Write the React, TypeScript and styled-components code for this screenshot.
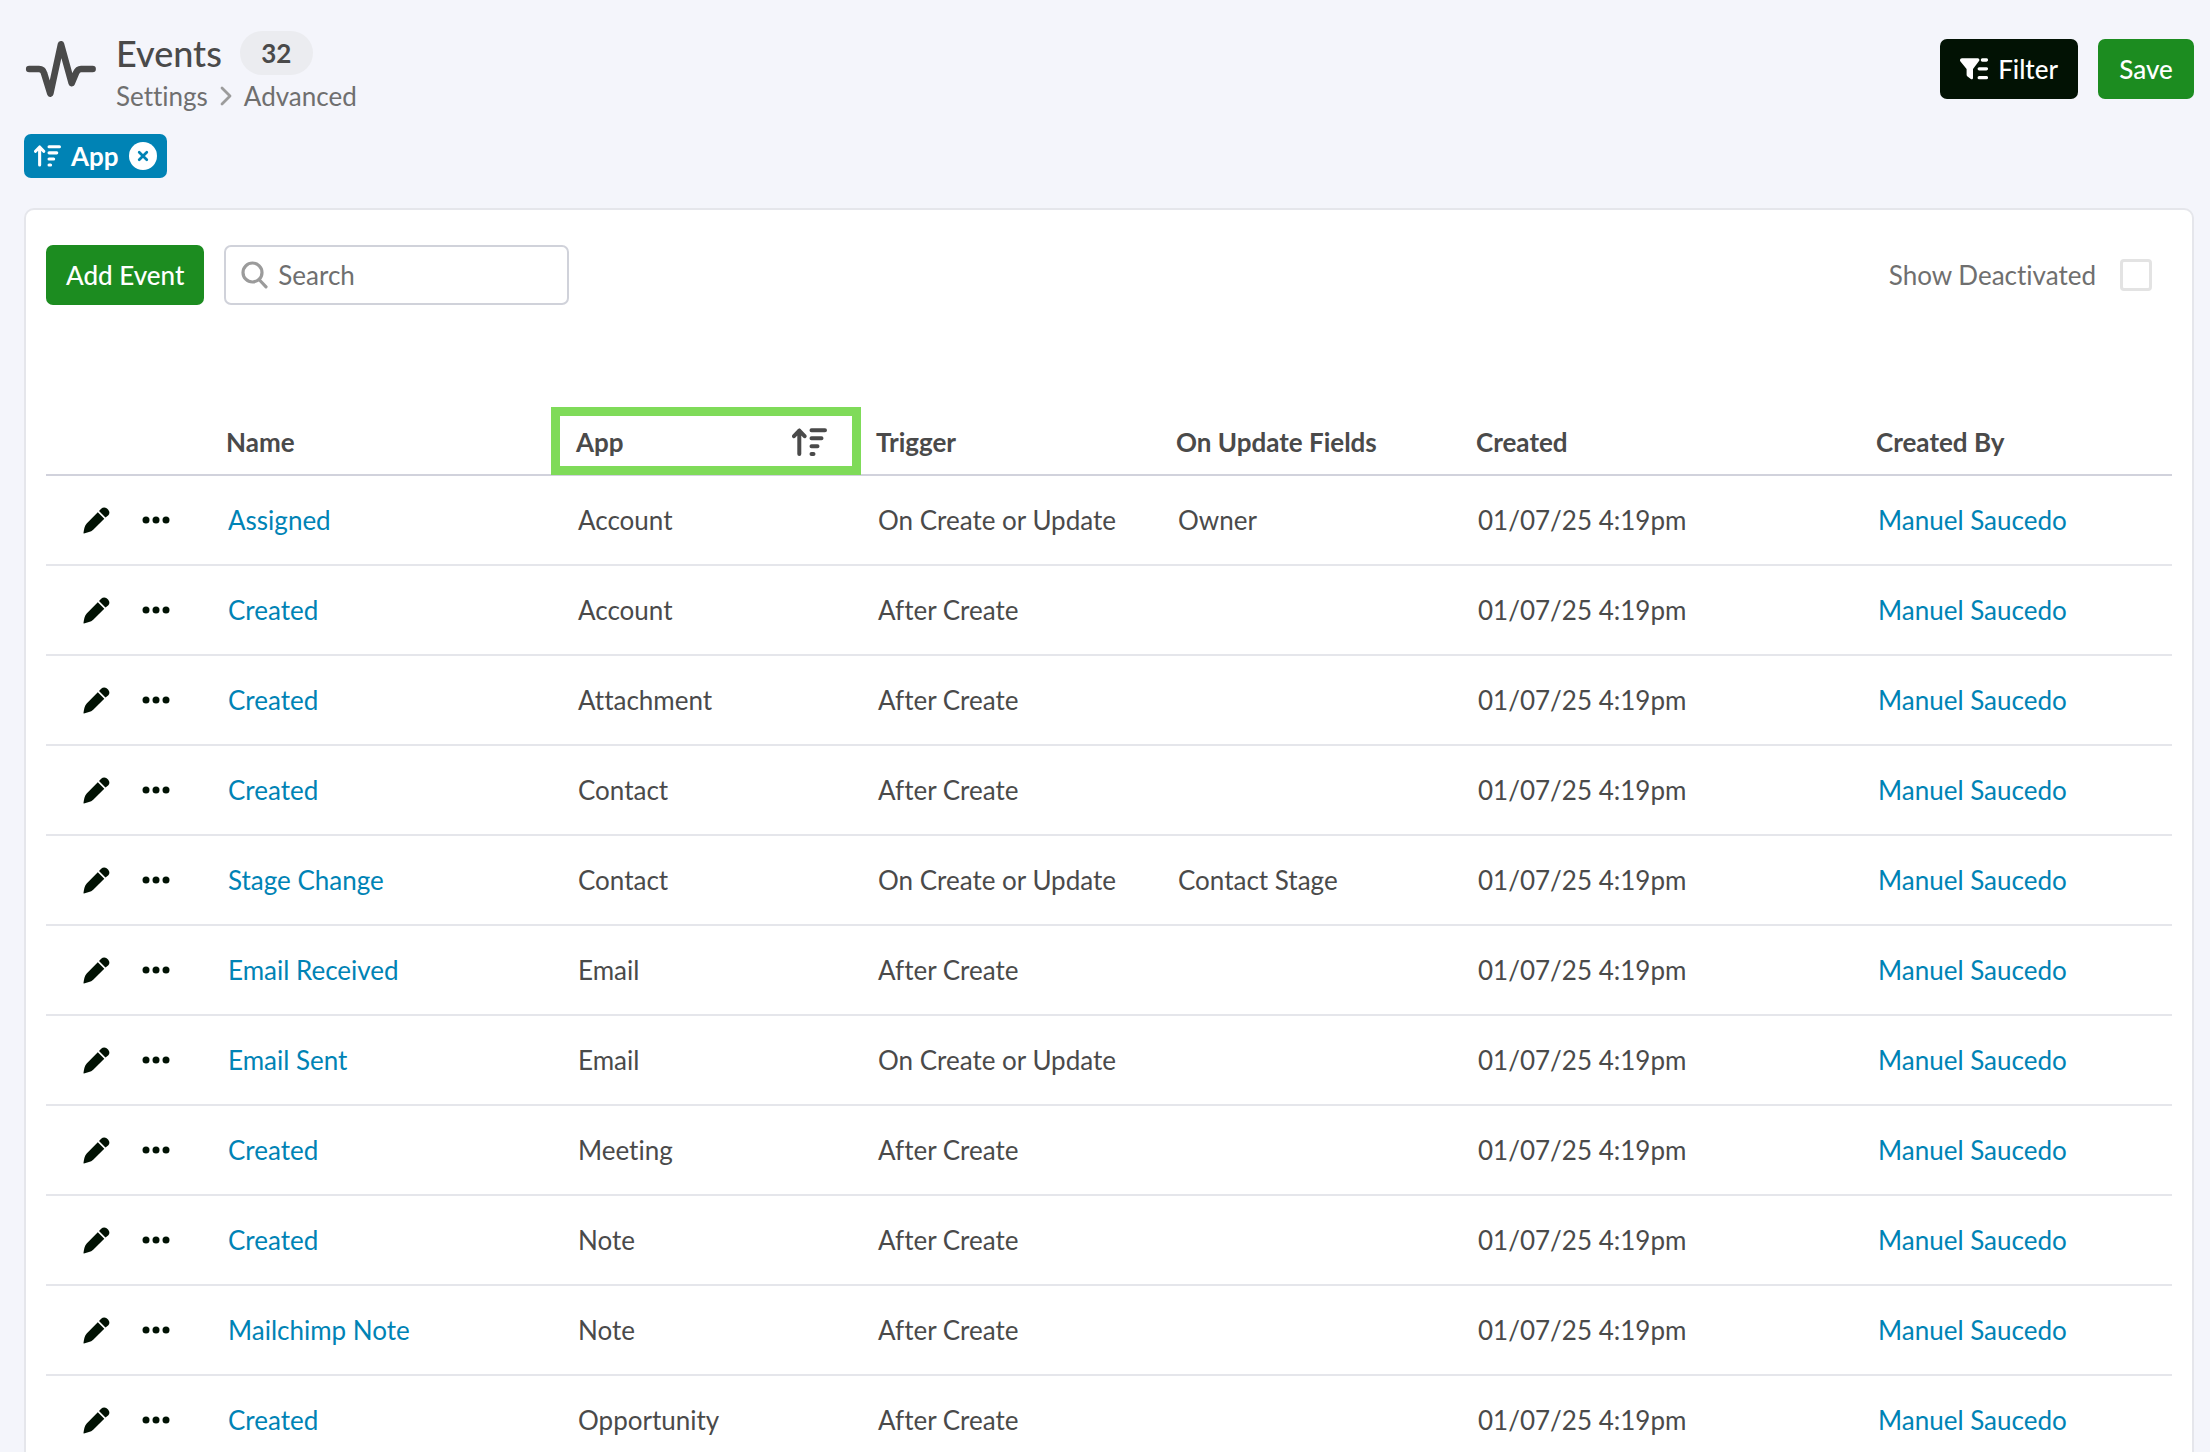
import React from "react";
import styled, { createGlobalStyle } from "styled-components";

const ink = "#4a4a4a";
const muted = "#6f6f6f";
const dark = "#021204";
const green = "#1c8c20";
const blue = "#0083b5";

const GlobalStyle = createGlobalStyle`
  *, *::before, *::after { box-sizing: border-box; }
  body {
    margin: 0;
    background: #f4f5fb;
    color: ${ink};
    font-family: Lato, "Open Sans", "Liberation Sans", sans-serif;
    font-size: 26px;
    line-height: 32px;
    font-variant-ligatures: none;
  }
  button, input { font: inherit; color: inherit; }
  svg { display: block; flex: none; }
`;

const Page = styled.div`
  display: flex;
  flex-direction: column;
  height: 100vh;
  overflow: hidden;
  padding: 31px 16px 0 24px;
`;

const Header = styled.header`
  display: flex;
  align-items: flex-start;
  flex: none;
`;

const HeaderIcon = styled.div`
  padding-top: 7px;
  margin-right: 18px;
`;

const Heading = styled.div`
  flex: 1;
`;

const TitleRow = styled.div`
  display: flex;
  align-items: center;
  gap: 18px;
  height: 44px;
`;

const Title = styled.h1`
  margin: 0;
  font-size: 36px;
  line-height: 44px;
  font-weight: 500;
`;

const Count = styled.span`
  width: 73px;
  border-radius: 22px;
  background: #ebecf0;
  line-height: 44px;
  font-weight: 700;
  text-align: center;
`;

const Breadcrumb = styled.nav`
  display: flex;
  align-items: center;
  gap: 12px;
  margin-top: 5px;
  color: ${muted};
`;

const Crumb = styled.a`
  color: inherit;
  text-decoration: none;
`;

const HeaderActions = styled.div`
  display: flex;
  gap: 20px;
  padding-top: 8px;
`;

const Button = styled.button<{ $tone: string }>`
  display: flex;
  align-items: center;
  justify-content: center;
  gap: 10px;
  min-width: 96px;
  height: 60px;
  padding: 0 20px;
  border: 0;
  border-radius: 7px;
  background: ${(p) => p.$tone};
  color: #fff;
  font-weight: 500;
  white-space: nowrap;
  cursor: pointer;
`;

const SortChips = styled.div`
  display: flex;
  flex: none;
  padding: 22px 0 30px;
`;

const SortChip = styled.div`
  display: flex;
  align-items: center;
  gap: 10px;
  height: 44px;
  padding: 0 10px;
  border-radius: 7px;
  background: ${blue};
  color: #fff;
  font-weight: 700;
`;

const ChipRemove = styled.button`
  display: flex;
  align-items: center;
  justify-content: center;
  width: 28px;
  height: 28px;
  padding: 0;
  border: 0;
  border-radius: 50%;
  background: #fff;
  color: ${blue};
  cursor: pointer;
`;

const Card = styled.main`
  flex: none;
  padding: 35px 20px 40px;
  border: 2px solid #e5e6eb;
  border-radius: 10px;
  background: #fff;
`;

const Toolbar = styled.div`
  display: flex;
  align-items: center;
  gap: 20px;
  padding-right: 20px;
  margin-bottom: 101px;
`;

const SearchBox = styled.label`
  display: flex;
  align-items: center;
  gap: 10px;
  width: 345px;
  height: 60px;
  padding: 0 15px;
  border: 2px solid #d0d2da;
  border-radius: 7px;
`;

const SearchInput = styled.input`
  flex: 1;
  min-width: 0;
  padding: 0;
  border: 0;
  outline: 0;
  background: transparent;
  &::placeholder { color: ${muted}; opacity: 1; }
`;

const Toggle = styled.label`
  display: flex;
  align-items: center;
  gap: 24px;
  margin-left: auto;
  color: ${muted};
`;

const Checkbox = styled.input`
  appearance: none;
  width: 32px;
  height: 32px;
  margin: 0;
  border: 3px solid #e3e3e3;
  border-radius: 4px;
  background: #fff;
  &:checked { background: ${green}; }
`;

const Table = styled.table`
  width: 100%;
  table-layout: fixed;
  border-collapse: separate;
  border-spacing: 0;
`;

const Column = styled.col<{ $width: number }>`
  width: ${(p) => p.$width}px;
`;

const HeadCell = styled.th`
  position: relative;
  height: 70px;
  padding: 4px 0 0 14px;
  border-bottom: 2px solid #d1d2dc;
  font-weight: 700;
  text-align: left;
  white-space: nowrap;
`;

const SortedLabel = styled.div`
  display: flex;
  align-items: center;
  justify-content: space-between;
  padding-right: 35px;
`;

const Highlight = styled.span`
  position: absolute;
  inset: 1px 1px -1px -11px;
  border: 9px solid #7fdb59;
  pointer-events: none;
`;

const Cell = styled.td`
  height: 90px;
  padding: 0 0 0 16px;
  border-bottom: 2px solid #e5e6eb;
  white-space: nowrap;
`;

const RowActions = styled.div`
  display: flex;
  align-items: center;
  gap: 32px;
  padding-left: 21px;
`;

const IconButton = styled.button`
  padding: 0;
  border: 0;
  background: none;
  color: ${dark};
  cursor: pointer;
`;

const CellLink = styled.a`
  color: ${blue};
  text-decoration: none;
`;

const PulseIcon = () => (
  <svg width="74" height="62" viewBox="24 38 74 62" fill="none" stroke={ink} strokeWidth="6.6" strokeLinecap="round" strokeLinejoin="round" aria-hidden="true">
    <path d="M29.2 69H39q4 0 5 4l6.3 20.5L61 44.3l10.7 38.8L76 73q1.700-4 5-4h11.600" />
  </svg>
);

const ChevronIcon = () => (
  <svg width="12" height="20" viewBox="0 0 12 20" fill="none" stroke="#9c9c9c" strokeWidth="2.800" strokeLinecap="round" strokeLinejoin="round" aria-hidden="true">
    <path d="M2 2l8 8-8 8" />
  </svg>
);

const SortIcon = ({ width }: { width: number }) => (
  <svg width={width} height={(width * 28) / 35} viewBox="0 0 35 28" fill="none" stroke="currentColor" strokeWidth="4" strokeLinecap="round" strokeLinejoin="round" aria-hidden="true">
    <path d="M7.300 26V2.500M2 8.200l5.300-5.700 5.300 5.700M19.500 2.200H33M19.500 10.200H29.500M19.500 18.200H25.500M19.500 26H21.500" />
  </svg>
);

const FilterIcon = () => (
  <svg width="28" height="22" viewBox="0 0 28 22" aria-hidden="true">
    <path fill="#fff" d="M2 .3h15.600a1.700 1.700 0 0 1 1.400 2.800L13 11v9c0 1.200-1.300 1.700-2.200 1L7.500 18.400c-.6-.5-.9-1-.9-1.700V11L.5 3.600C-.6 2.200.2.3 2 .3z" />
    <path fill="none" stroke="#fff" strokeWidth="3.300" strokeLinecap="round" d="M22.400 2h4M19.200 10.800h7.200M19.200 19.700h7.200" />
  </svg>
);

const CloseIcon = () => (
  <svg width="12" height="12" viewBox="0 0 12 12" fill="none" stroke="currentColor" strokeWidth="2.700" strokeLinecap="round" aria-hidden="true">
    <path d="M2.200 2.200l7.600 7.600M9.800 2.200L2.200 9.800" />
  </svg>
);

const SearchIcon = () => (
  <svg width="27" height="28" viewBox="0 0 27 28" fill="none" stroke="#9b9b9b" strokeWidth="3.200" strokeLinecap="round" aria-hidden="true">
    <circle cx="11.500" cy="11.500" r="9.500" />
    <path d="M18.500 19l6.500 6.800" />
  </svg>
);

const PencilIcon = () => (
  <svg width="27" height="27" viewBox="0 0 27 27" fill="currentColor" aria-hidden="true">
    <path d="M14.800 5.300l6.500 6.500L10.200 22.800C7.800 25 4.300 25.700 1 26.400c-.4.100-.6-.2-.5-.6.600-3.500.9-6.500 3.200-9.200z" />
    <path d="M16 4.100l2.200-2.300c1.600-1.600 3.800-1.700 5.400-.500 1.100.8 1.900 1.700 2.500 2.900.6 1.500.3 3.100-1 4.400l-2.600 2z" />
  </svg>
);

const DotsIcon = () => (
  <svg width="28" height="8" viewBox="0 0 28 8" fill="currentColor" aria-hidden="true">
    <circle cx="4" cy="4" r="3.500" />
    <circle cx="14" cy="4" r="3.500" />
    <circle cx="24" cy="4" r="3.500" />
  </svg>
);

const columnWidths = [166, 350, 300, 300, 300, 400, 310];

type EventRow = { name: string; app: string; trigger: string; fields?: string };

const events: EventRow[] = [
  { name: "Assigned", app: "Account", trigger: "On Create or Update", fields: "Owner" },
  { name: "Created", app: "Account", trigger: "After Create" },
  { name: "Created", app: "Attachment", trigger: "After Create" },
  { name: "Created", app: "Contact", trigger: "After Create" },
  { name: "Stage Change", app: "Contact", trigger: "On Create or Update", fields: "Contact Stage" },
  { name: "Email Received", app: "Email", trigger: "After Create" },
  { name: "Email Sent", app: "Email", trigger: "On Create or Update" },
  { name: "Created", app: "Meeting", trigger: "After Create" },
  { name: "Created", app: "Note", trigger: "After Create" },
  { name: "Mailchimp Note", app: "Note", trigger: "After Create" },
  { name: "Created", app: "Opportunity", trigger: "After Create" },
];

export default function App() {
  return (
    <>
      <GlobalStyle />
      <Page>
        <Header>
          <HeaderIcon>
            <PulseIcon />
          </HeaderIcon>
          <Heading>
            <TitleRow>
              <Title>Events</Title>
              <Count>32</Count>
            </TitleRow>
            <Breadcrumb>
              <Crumb href="#settings">Settings</Crumb>
              <ChevronIcon />
              <Crumb href="#advanced">Advanced</Crumb>
            </Breadcrumb>
          </Heading>
          <HeaderActions>
            <Button type="button" $tone={dark}>
              <FilterIcon />
              Filter
            </Button>
            <Button type="button" $tone={green}>Save</Button>
          </HeaderActions>
        </Header>

        <SortChips>
          <SortChip>
            <SortIcon width={27} />
            App
            <ChipRemove type="button" aria-label="Remove sort">
              <CloseIcon />
            </ChipRemove>
          </SortChip>
        </SortChips>

        <Card>
          <Toolbar>
            <Button type="button" $tone={green}>Add Event</Button>
            <SearchBox>
              <SearchIcon />
              <SearchInput type="text" placeholder="Search" aria-label="Search" />
            </SearchBox>
            <Toggle>
              Show Deactivated
              <Checkbox type="checkbox" />
            </Toggle>
          </Toolbar>

          <Table>
            <colgroup>
              {columnWidths.map((width, i) => (
                <Column key={i} $width={width} />
              ))}
            </colgroup>
            <thead>
              <tr>
                <HeadCell aria-label="Actions" />
                <HeadCell>Name</HeadCell>
                <HeadCell aria-sort="ascending">
                  <SortedLabel>
                    App
                    <SortIcon width={35} />
                  </SortedLabel>
                  <Highlight />
                </HeadCell>
                <HeadCell>Trigger</HeadCell>
                <HeadCell>On Update Fields</HeadCell>
                <HeadCell>Created</HeadCell>
                <HeadCell>Created By</HeadCell>
              </tr>
            </thead>
            <tbody>
              {events.map((event, i) => (
                <tr key={i}>
                  <Cell>
                    <RowActions>
                      <IconButton type="button" aria-label="Edit">
                        <PencilIcon />
                      </IconButton>
                      <IconButton type="button" aria-label="More actions">
                        <DotsIcon />
                      </IconButton>
                    </RowActions>
                  </Cell>
                  <Cell>
                    <CellLink href="#event">{event.name}</CellLink>
                  </Cell>
                  <Cell>{event.app}</Cell>
                  <Cell>{event.trigger}</Cell>
                  <Cell>{event.fields}</Cell>
                  <Cell>01/07/25 4:19pm</Cell>
                  <Cell>
                    <CellLink href="#user">Manuel Saucedo</CellLink>
                  </Cell>
                </tr>
              ))}
            </tbody>
          </Table>
        </Card>
      </Page>
    </>
  );
}
